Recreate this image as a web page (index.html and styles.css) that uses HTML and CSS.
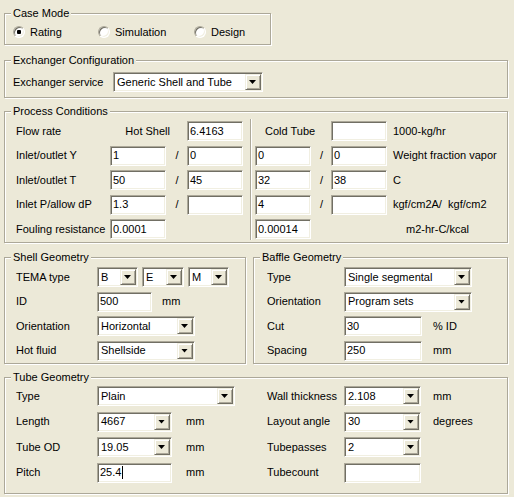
FILE: index.html
```html
<!DOCTYPE html>
<html>
<head>
<meta charset="utf-8">
<title>Exchanger</title>
<link rel="stylesheet" href="styles.css">
</head>
<body>
<fieldset class="group case">
  <legend class="gt">Case Mode</legend>
  <div class="case-body">
    <div class="radio-item"><span class="radio on"></span>Rating</div>
    <div class="radio-item"><span class="radio"></span>Simulation</div>
    <div class="radio-item"><span class="radio"></span>Design</div>
  </div>
</fieldset>

<fieldset class="group exch">
  <legend class="gt">Exchanger Configuration</legend>
  <div class="exch-body">
    <span class="exch-label">Exchanger service</span>
    <div class="cb w150"><span class="cb-text">Generic Shell and Tube</span><span class="cb-btn"></span></div>
  </div>
</fieldset>

<fieldset class="group proc">
  <legend class="gt">Process Conditions</legend>
  <div class="proc-body">
    <div class="sep"></div>

    <span>Flow rate</span>
    <span class="hot">Hot Shell</span>
    <div class="tb">6.4163</div>
    <span class="cold">Cold Tube</span>
    <div class="tb"></div>
    <span class="unit">1000-kg/hr</span>

    <span>Inlet/outlet Y</span>
    <div class="tb">1</div>
    <span class="slash">/</span>
    <div class="tb">0</div>
    <div class="tb">0</div>
    <span class="slash">/</span>
    <div class="tb">0</div>
    <span class="unit">Weight fraction vapor</span>

    <span>Inlet/outlet T</span>
    <div class="tb">50</div>
    <span class="slash">/</span>
    <div class="tb">45</div>
    <div class="tb">32</div>
    <span class="slash">/</span>
    <div class="tb">38</div>
    <span class="unit">C</span>

    <span>Inlet P/allow dP</span>
    <div class="tb">1.3</div>
    <span class="slash">/</span>
    <div class="tb"></div>
    <div class="tb">4</div>
    <span class="slash">/</span>
    <div class="tb"></div>
    <span class="unit">kgf/cm2A/&nbsp;&nbsp;kgf/cm2</span>

    <span>Fouling resistance</span>
    <div class="tb">0.0001</div>
    <div class="tb col6">0.00014</div>
    <span class="unit col9 far">m2-hr-C/kcal</span>
  </div>
</fieldset>

<div class="geo-row">
  <fieldset class="group shell">
    <legend class="gt">Shell Geometry</legend>
    <div class="shell-body">
      <span>TEMA type</span>
      <div class="tema">
        <div class="cb w41"><span class="cb-text">B</span><span class="cb-btn"></span></div>
        <div class="cb w42"><span class="cb-text">E</span><span class="cb-btn"></span></div>
        <div class="cb w41"><span class="cb-text">M</span><span class="cb-btn"></span></div>
      </div>

      <span>ID</span>
      <div class="ctl"><div class="tb w55">500</div><span class="u10">mm</span></div>

      <span>Orientation</span>
      <div class="cb w98"><span class="cb-text">Horizontal</span><span class="cb-btn"></span></div>

      <span>Hot fluid</span>
      <div class="cb w98"><span class="cb-text">Shellside</span><span class="cb-btn"></span></div>
    </div>
  </fieldset>

  <fieldset class="group baffle">
    <legend class="gt">Baffle Geometry</legend>
    <div class="baffle-body">
      <span>Type</span>
      <div class="cb w128"><span class="cb-text">Single segmental</span><span class="cb-btn"></span></div>

      <span>Orientation</span>
      <div class="cb w128"><span class="cb-text">Program sets</span><span class="cb-btn"></span></div>

      <span>Cut</span>
      <div class="ctl"><div class="tb w78">30</div><span class="u11">% ID</span></div>

      <span>Spacing</span>
      <div class="ctl"><div class="tb w78">250</div><span class="u11">mm</span></div>
    </div>
  </fieldset>
</div>

<fieldset class="group tube">
  <legend class="gt">Tube Geometry</legend>
  <div class="tube-body">
    <span>Type</span>
    <div class="cb w138"><span class="cb-text">Plain</span><span class="cb-btn"></span></div>
    <span>Wall thickness</span>
    <div class="ctl"><div class="cb w77"><span class="cb-text">2.108</span><span class="cb-btn"></span></div><span class="u12">mm</span></div>

    <span>Length</span>
    <div class="ctl"><div class="cb w75"><span class="cb-text">4667</span><span class="cb-btn"></span></div><span class="u14">mm</span></div>
    <span>Layout angle</span>
    <div class="ctl"><div class="cb w77"><span class="cb-text">30</span><span class="cb-btn"></span></div><span class="u12">degrees</span></div>

    <span>Tube OD</span>
    <div class="ctl"><div class="cb w75"><span class="cb-text">19.05</span><span class="cb-btn"></span></div><span class="u14">mm</span></div>
    <span>Tubepasses</span>
    <div class="ctl"><div class="cb w77"><span class="cb-text">2</span><span class="cb-btn"></span></div></div>

    <span>Pitch</span>
    <div class="ctl"><div class="tb w75">25.4<span class="caret"></span></div><span class="u14">mm</span></div>
    <span>Tubecount</span>
    <div class="ctl"><div class="tb w77"></div></div>
  </div>
</fieldset>
</body>
</html>
```

FILE: styles.css
```css
* { box-sizing: border-box; }

html, body {
  margin: 0;
  background: #ece9d8;
}

body {
  width: 514px;
  height: 497px;
  overflow: hidden;
  padding: 7px 6px 0 4px;
  font-family: "Liberation Sans", Arial, sans-serif;
  font-size: 11px;
  line-height: 13px;
  color: #000;
}

/* group boxes (etched) */
.group {
  margin: 0;
  padding: 0;
  min-width: 0;
  border: 1px solid #aca899;
  box-shadow: 1px 1px 0 #fff, inset 1px 1px 0 #fff;
}

.gt {
  margin-left: 6px;
  padding: 0 2px;
  height: 13px;
  line-height: 13px;
  background: #ece9d8;
}

/* case mode */
.case { width: 267px; }

.case-body {
  display: grid;
  grid-template-columns: 85px 96px auto;
  height: 24px;
  padding: 5px 0 5px 8px;
}

.radio-item {
  display: flex;
  align-items: center;
  gap: 5px;
  height: 14px;
}

.radio {
  position: relative;
  width: 12px;
  height: 12px;
  border-radius: 50%;
  background: #fff;
  border: 1px solid;
  border-color: #aca899 #fff #fff #aca899;
  box-shadow: inset 1px 1px 0 #716f64, inset -1px -1px 0 #f1efe2;
}

.radio.on::after {
  content: "";
  position: absolute;
  left: 3px;
  top: 3px;
  width: 4px;
  height: 4px;
  border-radius: 1px;
  background: #000;
}

/* exchanger config */
.exch { margin-top: 9px; }

.exch-body {
  display: flex;
  align-items: center;
  padding: 5px 0 5px 8px;
}

.exch-label { width: 100px; }

/* fields */
.tb {
  display: flex;
  align-items: center;
  height: 20px;
  padding-left: 2px;
  background: #fff;
  border: 1px solid;
  border-color: #aca899 #fff #fff #aca899;
  box-shadow: inset 1px 1px 0 #716f64, inset -1px -1px 0 #f1efe2;
  white-space: nowrap;
}

.caret {
  display: inline-block;
  width: 1px;
  height: 13px;
  margin-left: 1px;
  background: #000;
}

.cb {
  display: flex;
  height: 20px;
  background: #fff;
  border: 1px solid;
  border-color: #aca899 #fff #fff #aca899;
  box-shadow: inset 1px 1px 0 #716f64, inset -1px -1px 0 #f1efe2;
}

.cb-text {
  flex: 1;
  display: flex;
  align-items: center;
  padding-left: 3px;
  white-space: nowrap;
  overflow: hidden;
}

.cb-btn {
  position: relative;
  flex: 0 0 16px;
  margin: 1px;
  background: #ece9d8;
  border: 1px solid;
  border-color: #f1efe2 #716f64 #716f64 #f1efe2;
  box-shadow: inset 1px 1px 0 #fff, inset -1px -1px 0 #aca899;
}

.cb-btn::after {
  content: "";
  position: absolute;
  left: 3px;
  top: 5px;
  width: 7px;
  height: 4px;
  background: #000;
  clip-path: polygon(0 0, 100% 0, 50% 100%);
}

.w41 { width: 41px; }
.w42 { width: 42px; }
.w55 { width: 55px; }
.w75 { width: 75px; }
.w77 { width: 77px; }
.w78 { width: 78px; }
.w98 { width: 98px; }
.w128 { width: 128px; }
.w138 { width: 138px; }
.w150 { width: 150px; }

.ctl {
  display: flex;
  align-items: center;
}

.u10 { margin-left: 10px; }
.u11 { margin-left: 11px; }
.u12 { margin-left: 12px; }
.u14 { margin-left: 14px; }

/* process conditions */
.proc { margin-top: 7px; }

.proc-body {
  display: grid;
  grid-template-columns: 94px 56px 21px 56px 12px 56px 20px 56px 1fr;
  grid-auto-rows: 20px;
  row-gap: 4.5px;
  align-items: center;
  padding: 3px 0 3px 11px;
}

.sep {
  grid-column: 5;
  grid-row: 1 / 6;
  align-self: stretch;
  justify-self: start;
  width: 2px;
  margin: -2px 0 -1px 7px;
  border-left: 1px solid #aca899;
  border-right: 1px solid #fff;
}

.hot {
  grid-column: span 2;
  text-align: right;
  padding-right: 17px;
}

.cold {
  grid-column: span 2;
  padding-left: 10px;
}

.slash {
  text-align: center;
  padding-left: 1px;
}

.unit {
  padding-left: 6px;
  white-space: nowrap;
}

.col6 { grid-column: 6; }
.col9 { grid-column: 9; }
.far { padding-left: 19px; }

/* shell + baffle */
.geo-row {
  display: flex;
  gap: 7px;
  margin-top: 8px;
}

.shell { width: 242px; }
.baffle { flex: 1; }

.shell-body,
.baffle-body {
  display: grid;
  grid-auto-rows: 20px;
  row-gap: 4.5px;
  align-items: center;
  padding-top: 3px;
  padding-bottom: 2.5px;
}

.shell-body {
  grid-template-columns: 81px 1fr;
  padding-left: 11px;
}

.baffle-body {
  grid-template-columns: 77px 1fr;
  padding-left: 13px;
}

.tema {
  display: flex;
  gap: 4px;
}

/* tube */
.tube { margin-top: 7px; }

.tube-body {
  display: grid;
  grid-template-columns: 81px 170px 77px 1fr;
  grid-auto-rows: 20px;
  row-gap: 5.5px;
  align-items: center;
  padding: 2px 0 10.5px 11px;
}
```
